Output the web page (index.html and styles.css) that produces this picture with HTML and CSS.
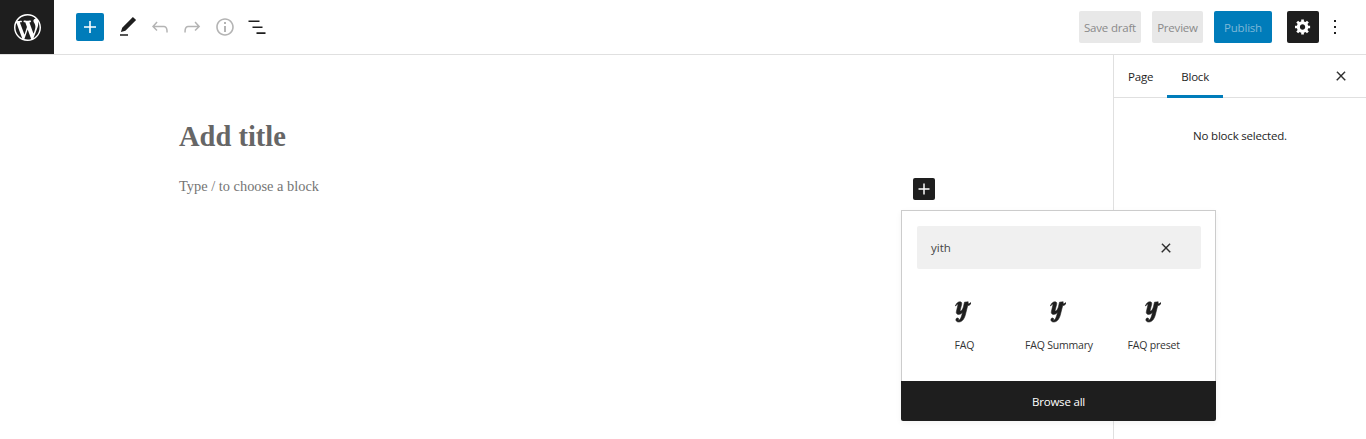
FILE: index.html
```html
<!DOCTYPE html>
<html lang="en">
<head>
    <meta charset="UTF-8">
    <title>Add title</title>
    <link rel="stylesheet" href="styles.css">
</head>
<body>
    <header class="topbar">
        <div class="logo">
            <svg width="27" height="27" viewBox="0 0 20 20"><path fill="#fff" d="M20 10c0-5.51-4.49-10-10-10C4.48 0 0 4.49 0 10c0 5.52 4.48 10 10 10 5.51 0 10-4.48 10-10zM7.78 15.37L4.37 6.22c.55-.02 1.17-.08 1.17-.08.5-.06.44-1.13-.06-1.11 0 0-1.45.11-2.37.11-.18 0-.37 0-.58-.01C4.12 2.69 6.87 1.11 10 1.11c2.33 0 4.45.87 6.05 2.34-.68-.11-1.65.39-1.65 1.58 0 .74.45 1.36.9 2.1.35.61.55 1.36.55 2.46 0 1.49-1.4 5-1.4 5l-3.03-8.37c.54-.02.82-.17.82-.17.5-.05.44-1.25-.06-1.22 0 0-1.44.12-2.38.12-.87 0-2.33-.12-2.33-.12-.5-.03-.56 1.2-.06 1.22l.92.08 1.26 3.41zM17.41 10c.24-.64.74-1.87.43-4.25.7 1.29 1.05 2.71 1.05 4.25 0 3.29-1.73 6.24-4.4 7.78.97-2.59 1.94-5.2 2.92-7.78zM6.1 18.09C3.12 16.65 1.11 13.53 1.11 10c0-1.3.23-2.48.72-3.59C3.25 10.3 4.67 14.2 6.1 18.09zm4.03-6.63l2.58 6.98c-.86.29-1.76.45-2.71.45-.79 0-1.57-.11-2.29-.33.81-2.38 1.62-4.74 2.42-7.1z"/></svg>
        </div>
        <div class="tools">
            <button class="add-btn">
                <svg width="24" height="24" viewBox="0 0 24 24"><path fill="#fff" d="M18 11.200h-5.200V6h-1.600v5.200H6v1.600h5.200V18h1.600v-5.200H18z"/></svg>
            </button>
            <button class="tool-btn">
                <svg width="24" height="24" viewBox="0 0 24 24"><path fill="#1e1e1e" d="M20.100 5.100L16.900 2 6.200 12.700l-1.300 4.400 4.500-1.300L20.100 5.100zM4 20.800h8v-1.500H4v1.500z"/></svg>
            </button>
            <button class="tool-btn">
                <svg width="24" height="24" viewBox="0 0 24 24"><path fill="#b4b4b4" d="M18.300 11.700c-.6-.6-1.400-.9-2.300-.9H6.700l2.900-3.300-1.100-1-4.500 5L8.500 16l1-1-2.700-2.700H16c.5 0 .9.2 1.300.5 1 1 1 3.400 1 4.500v.3h1.500v-.2c0-1.500 0-4.300-1.500-5.700z"/></svg>
            </button>
            <button class="tool-btn">
                <svg width="24" height="24" viewBox="0 0 24 24"><path fill="#b4b4b4" d="M15.600 6.500l-1.100 1 2.900 3.300H8c-.9 0-1.700.3-2.300.9-1.400 1.500-1.400 4.200-1.400 5.600v.2h1.500v-.3c0-1.100 0-3.500 1-4.500.3-.3.7-.5 1.300-.5h9.200L14.500 15l1.100 1.100 4.600-4.600-4.600-5z"/></svg>
            </button>
            <button class="tool-btn info">
                <svg width="24" height="24" viewBox="0 0 24 24"><path fill="#b4b4b4" d="M12 3.200c-4.800 0-8.800 3.900-8.800 8.800 0 4.800 3.900 8.800 8.800 8.800 4.800 0 8.800-3.900 8.800-8.800 0-4.800-4-8.800-8.800-8.800zm0 16c-4 0-7.200-3.300-7.200-7.200C4.800 8 8 4.800 12 4.800s7.200 3.300 7.200 7.200c0 4-3.200 7.200-7.200 7.200zM11 17h2v-6h-2v6zm0-8h2V7h-2v2z"/></svg>
            </button>
            <button class="tool-btn">
                <svg width="24" height="24" viewBox="0 0 24 24"><path fill="#1e1e1e" d="M4 5.500h11v1.600H4zM8 11.500h10v1.600H8zM12 17.300h9v1.600h-9z" transform="translate(-.5 0)"/></svg>
            </button>
        </div>
        <div class="actions">
            <button class="ghost-btn save">Save draft</button>
            <button class="ghost-btn preview">Preview</button>
            <button class="publish">Publish</button>
            <button class="settings">
                <svg width="16" height="16" viewBox="1 1.500 18 18"><path fill="#fff" d="M18 12h-2.180c-.17.7-.44 1.350-.81 1.930l1.540 1.540-2.100 2.100-1.540-1.540c-.58.36-1.230.63-1.910.79V19H8v-2.180c-.68-.16-1.330-.43-1.910-.79l-1.540 1.540-2.120-2.120 1.540-1.540c-.36-.58-.63-1.230-.79-1.910H1V9.030h2.170c.16-.7.44-1.350.8-1.940L2.430 5.550l2.100-2.100 1.540 1.540c.58-.37 1.240-.64 1.930-.81V2h3v2.180c.68.16 1.330.43 1.910.79l1.540-1.540 2.120 2.120-1.540 1.540c.36.59.64 1.240.8 1.940H18V12zm-8.500 1.500c1.660 0 3-1.340 3-3s-1.340-3-3-3-3 1.340-3 3 1.340 3 3 3z"/></svg>
            </button>
            <button class="more">
                <svg width="24" height="24" viewBox="0 0 24 24"><path fill="#1e1e1e" d="M13 19h-2v-2h2v2zm0-6h-2v-2h2v2zm0-6h-2V5h2v2z"/></svg>
            </button>
        </div>
    </header>

    <div class="workspace">
        <main class="editor">
            <div class="content">
                <h1 class="title">Add title</h1>
                <p class="placeholder">Type / to choose a block</p>
            </div>
            <button class="block-add">
                <svg width="22" height="22" viewBox="0 0 24 24"><path fill="#fff" d="M18 11.200h-5.200V6h-1.600v5.200H6v1.600h5.200V18h1.600v-5.200H18z"/></svg>
            </button>
            <div class="inserter">
                <div class="inserter-top">
                    <div class="search">
                        <span>yith</span>
                        <svg class="close" width="14" height="14" viewBox="0 0 24 24"><path d="M13 11.800l6.100-6.300-1-1-6.100 6.200-6.100-6.200-1 1 6.100 6.300-6.500 6.700 1 1 6.500-6.600 6.500 6.600 1-1z"/></svg>
                    </div>
                    <div class="results">
                        <div class="result">
                            <svg class="yith" width="16" height="22" viewBox="0 0 16 22"><path d="M.5 5C1 2.500 3 .8 5 .8c1.600 0 2 1.200 1.600 2.700L5.200 9c-.2 1 .4 1.400 1.100.8.900-.8 1.700-2.300 2.200-4.300l1-4.300 3.700-.4-.2 1.800c1 .2 2-.2 2.800-1l.2.800c-1 1.600-2 2.200-3.300 2.100L10.800 12c-1 5-3.300 9-7 9-2.300 0-3.300-1.500-2.800-3 .5-1.200 2-1.400 2.600-.4.400.8-.1 1.400-.6 1.800 1.500.2 3-1.900 4-5.900l.4-2c-1.100 1.300-2.400 1.900-3.800 1.900-1.800 0-2.600-1.200-2.200-2.900l1.400-6c.2-1.200-.2-1.500-1-1.100-.5.3-.8.900-.9 1.600z"/></svg>
                            <span class="result-name">FAQ</span>
                        </div>
                        <div class="result">
                            <svg class="yith" width="16" height="22" viewBox="0 0 16 22"><path d="M.5 5C1 2.500 3 .8 5 .8c1.600 0 2 1.200 1.600 2.700L5.200 9c-.2 1 .4 1.400 1.100.8.900-.8 1.700-2.300 2.200-4.300l1-4.300 3.700-.4-.2 1.800c1 .2 2-.2 2.800-1l.2.800c-1 1.600-2 2.200-3.300 2.100L10.800 12c-1 5-3.300 9-7 9-2.300 0-3.300-1.500-2.800-3 .5-1.200 2-1.400 2.600-.4.400.8-.1 1.400-.6 1.800 1.500.2 3-1.900 4-5.900l.4-2c-1.100 1.300-2.400 1.900-3.800 1.900-1.800 0-2.600-1.200-2.200-2.900l1.400-6c.2-1.200-.2-1.500-1-1.100-.5.3-.8.900-.9 1.600z"/></svg>
                            <span class="result-name">FAQ Summary</span>
                        </div>
                        <div class="result">
                            <svg class="yith" width="16" height="22" viewBox="0 0 16 22"><path d="M.5 5C1 2.500 3 .8 5 .8c1.600 0 2 1.200 1.600 2.700L5.200 9c-.2 1 .4 1.400 1.100.8.900-.8 1.700-2.300 2.200-4.300l1-4.300 3.700-.4-.2 1.800c1 .2 2-.2 2.800-1l.2.800c-1 1.600-2 2.200-3.300 2.100L10.800 12c-1 5-3.300 9-7 9-2.300 0-3.300-1.500-2.800-3 .5-1.200 2-1.400 2.600-.4.400.8-.1 1.400-.6 1.800 1.500.2 3-1.900 4-5.900l.4-2c-1.100 1.300-2.400 1.900-3.800 1.900-1.800 0-2.600-1.200-2.200-2.900l1.400-6c.2-1.200-.2-1.500-1-1.100-.5.3-.8.900-.9 1.600z"/></svg>
                            <span class="result-name">FAQ preset</span>
                        </div>
                    </div>
                </div>
                <div class="browse">Browse all</div>
            </div>
        </main>
        <aside class="sidebar">
            <div class="tabs">
                <span class="tab">Page</span>
                <span class="tab active">Block</span>
                <svg class="close tabs-close" width="14" height="14" viewBox="0 0 24 24"><path d="M13 11.800l6.100-6.300-1-1-6.100 6.200-6.100-6.200-1 1 6.100 6.300-6.500 6.700 1 1 6.500-6.600 6.500 6.600 1-1z"/></svg>
            </div>
            <p class="no-block">No block selected.</p>
        </aside>
    </div>
</body>
</html>
```

FILE: styles.css
```css
* {
    box-sizing: border-box;
}

html, body {
    height: 100%;
}

body {
    margin: 0;
    overflow: hidden;
    background-color: #fff;
    color: #1e1e1e;
    font-family: "Open Sans", "Noto Sans", sans-serif;
    font-size: 11.5px;
    letter-spacing: -0.2px;
    display: flex;
    flex-direction: column;
}

button {
    border: none;
    padding: 0;
    background: none;
    font: inherit;
    letter-spacing: inherit;
    display: flex;
    align-items: center;
    justify-content: center;
}

.topbar {
    height: 55px;
    flex: none;
    display: flex;
    align-items: center;
    border-bottom: 1px solid #e0e0e0;
}

.logo {
    width: 54px;
    height: 54px;
    background-color: #1e1e1e;
    display: flex;
    align-items: center;
    justify-content: center;
}

.tools {
    display: flex;
    align-items: center;
    margin-left: 22px;
}

.add-btn {
    width: 28px;
    height: 28px;
    margin-right: 8px;
    background-color: #007cba;
    border-radius: 2px;
}

.tool-btn {
    width: 32px;
    height: 32px;
}

.tool-btn.info {
    margin-left: 1px;
}

.actions {
    margin-left: auto;
    display: flex;
    align-items: center;
    padding-right: 19px;
}

.ghost-btn,
.publish {
    height: 32px;
    border-radius: 2px;
    background-color: #e8e8e8;
    color: #8a8a8a;
}

.save {
    width: 62px;
    margin-right: 11px;
}

.preview {
    width: 51px;
    margin-right: 11px;
}

.publish {
    width: 58px;
    margin-right: 15px;
    background-color: #007cba;
    color: #7db8d8;
}

.settings {
    width: 32px;
    height: 32px;
    margin-right: 4px;
    background-color: #1e1e1e;
    border-radius: 2px;
}

.more {
    width: 24px;
    height: 32px;
}

.workspace {
    flex: 1;
    display: flex;
    min-height: 0;
}

.editor {
    flex: 1;
    position: relative;
}

.content {
    padding: 64px 0 0 179px;
    letter-spacing: 0;
}

.title {
    margin: 0;
    font-family: "Liberation Serif", serif;
    font-size: 28.5px;
    line-height: 36px;
    font-weight: bold;
    color: #666;
}

.placeholder {
    margin: 21px 0 0;
    font-family: "Liberation Serif", serif;
    font-size: 14.4px;
    line-height: 20px;
    color: #757575;
}

.block-add {
    position: absolute;
    left: 913px;
    top: 123px;
    width: 22px;
    height: 22px;
    background-color: #1e1e1e;
    border-radius: 2px;
}

.inserter {
    position: absolute;
    left: 901px;
    top: 155px;
    width: 315px;
    height: 211px;
    display: flex;
    flex-direction: column;
    background-color: #fff;
    box-shadow: 0 2px 6px rgba(0, 0, 0, 0.05);
    border-radius: 2px;
}

.inserter-top {
    flex: 1;
    padding: 15px 14px 15px 15px;
    border: 1px solid #ccc;
    border-bottom: none;
}

.search {
    height: 43px;
    padding: 0 28px 0 14px;
    display: flex;
    align-items: center;
    justify-content: space-between;
    background-color: #f0f0f0;
    border-radius: 2px;
    color: #444;
    letter-spacing: 0;
}

.close {
    fill: #1e1e1e;
    stroke: #1e1e1e;
    stroke-width: 1;
}

.results {
    display: grid;
    grid-template-columns: repeat(3, 1fr);
    padding-top: 32px;
}

.result {
    display: flex;
    flex-direction: column;
    align-items: center;
    font-size: 10.5px;
}

.yith {
    display: block;
    margin-right: 2px;
    fill: #1e1e1e;
    stroke: #1e1e1e;
    stroke-width: 0.6;
}

.result-name {
    margin-top: 14px;
    line-height: 16px;
    color: #333;
}

.browse {
    height: 40px;
    display: flex;
    align-items: center;
    justify-content: center;
    background-color: #1e1e1e;
    color: #fff;
    border-radius: 0 0 2px 2px;
}

.sidebar {
    width: 253px;
    flex: none;
    border-left: 1px solid #e0e0e0;
}

.tabs {
    height: 43px;
    display: flex;
    align-items: center;
    border-bottom: 1px solid #e0e0e0;
}

.tab {
    height: 43px;
    padding: 0 14px;
    display: flex;
    align-items: center;
}

.tab.active {
    box-shadow: inset 0 -3px 0 #007cba;
}

.tabs-close {
    margin-left: auto;
    margin-right: 18px;
}

.no-block {
    margin: 30px 0 0;
    text-align: center;
    line-height: 16px;
}
```
